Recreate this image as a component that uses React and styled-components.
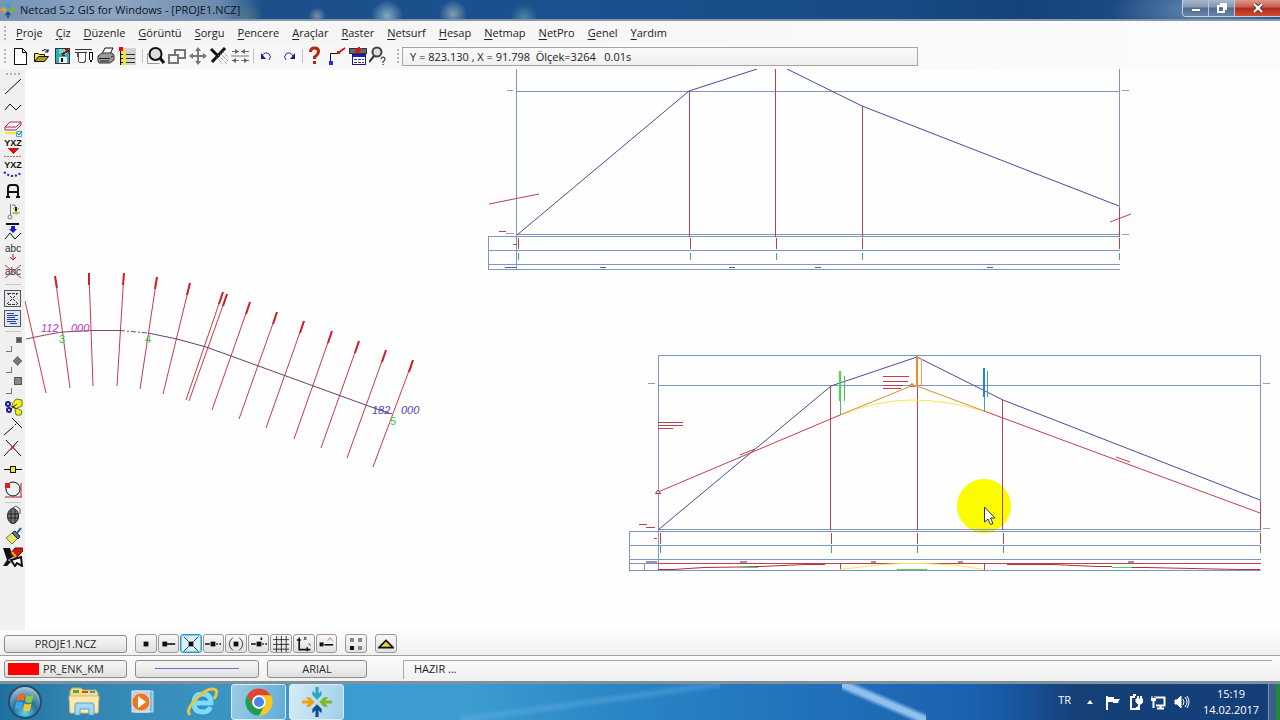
import React from "react";
import styled, { createGlobalStyle } from "styled-components";

const GlobalStyle = createGlobalStyle`
  * { box-sizing: border-box; }
  body {
    margin: 0;
    background: #fff;
    color: #222;
    font-family: "Open Sans", "Noto Sans", sans-serif;
    font-size: 11px;
    line-height: 16px;
  }
  button {
    margin: 0;
    padding: 0;
    border: 0;
    background: none;
    color: inherit;
    font: inherit;
  }
`;

const Window = styled.div`
  display: flex;
  flex-direction: column;
  min-height: 100vh;
`;

/* ---------- title bar ---------- */

const TitleBar = styled.header`
  display: flex;
  align-items: flex-start;
  height: 21px;
  border-bottom: 2px solid #8797ab;
  background:
    linear-gradient(90deg, rgba(150, 172, 198, 0.75), rgba(170, 188, 208, 0.8) 120px, rgba(140, 165, 190, 0.7) 220px, transparent 262px),
    radial-gradient(circle 16px at 248px 18px, rgba(60, 105, 105, 0.9), transparent),
    radial-gradient(circle 9px at 317px 16px, rgba(150, 160, 175, 0.8), transparent),
    radial-gradient(circle 16px at 387px 16px, rgba(140, 180, 195, 0.9), transparent),
    radial-gradient(circle 14px at 453px 14px, rgba(140, 165, 180, 0.9), transparent),
    radial-gradient(circle 14px at 524px 18px, rgba(80, 140, 165, 0.9), transparent),
    radial-gradient(ellipse 90px 30px at 1200px 10px, rgba(130, 160, 195, 0.7), transparent),
    linear-gradient(90deg, #1d4c86, #1b5190 45%, #184a85 70%, #15427a 80%, #25568f);
`;

const TitleText = styled.h1`
  flex: 1;
  margin: 0;
  padding: 2px 0 0 4px;
  color: #10151c;
  font-size: 11px;
  font-weight: 400;
  line-height: 16px;
`;

const TitleLogo = styled.svg`
  width: 16px;
  height: 18px;
  margin-top: 1px;
`;

const Caption = styled.div`
  display: flex;
  height: 17px;
  border: 1px solid #c3d0de;
  border-top: 0;
  border-right: 0;
  border-radius: 0 0 0 4px;
  overflow: hidden;
`;

const CaptionButton = styled.button`
  display: flex;
  align-items: center;
  justify-content: center;
  width: ${(p) => (p.$close ? 45 : 26)}px;
  border-right: ${(p) => (p.$close ? 0 : 1)}px solid #b9c8d8;
  background: ${(p) =>
    p.$close
      ? "linear-gradient(#dc9c8c, #c9594a 45%, #b52b1b 50%, #cf4a33)"
      : "linear-gradient(#a9b9cb, #8095b0 45%, #506d92 50%, #6884a6)"};
`;

/* ---------- menu and tool bars ---------- */

const MenuBar = styled.nav`
  display: flex;
  align-items: center;
  gap: 13px;
  height: 24px;
  padding-left: 4px;
  background: linear-gradient(90deg, #f3f3f3, #f9f9f9 70%, #fbfbfb);
`;

const MenuItem = styled.button`
  white-space: nowrap;
  u { text-underline-offset: 2px; }
`;

const Grip = styled.span`
  flex: none;
  width: ${(p) => (p.$across ? 14 : 2)}px;
  height: ${(p) => (p.$across ? 2 : 14)}px;
  background: ${(p) =>
    p.$across
      ? "repeating-linear-gradient(90deg, #b4b4b4 0 2px, transparent 2px 4px)"
      : "repeating-linear-gradient(#b4b4b4 0 2px, transparent 2px 4px)"};
`;

const MenuGrip = styled(Grip)`
  margin-right: -3px;
`;

const ToolBar = styled.div`
  display: flex;
  align-items: center;
  height: 24px;
  padding: 0 0 2px 4px;
  background: linear-gradient(90deg, #f6f6f6, #f9f9f9 70%, #fbfbfb);
`;

const ToolGroup = styled.div`
  display: flex;
  flex-direction: ${(p) => (p.$vertical ? "column" : "row")};
  gap: ${(p) => p.$gap || 0}px;
`;

const FirstGroup = styled.div`
  margin-left: 3px;
`;

const ToolButton = styled.button`
  flex: none;
  width: 20px;
  height: 20px;
  svg { display: block; }
`;

const Divider = styled.span`
  flex: none;
  width: 1px;
  height: 14px;
  margin: 0 3px;
  background: #c4c4c4;
`;

const Readout = styled.output`
  flex: 0 1 516px;
  height: 19px;
  margin-left: 3px;
  padding: 0 7px;
  border: 1px solid #a5a5a5;
  background: linear-gradient(#fafafa, #efefef);
  white-space: pre;
  line-height: 17px;
  overflow: hidden;
`;

const ReadoutGrip = styled(Grip)`
  margin-left: 8px;
`;

/* ---------- work area ---------- */

const WorkArea = styled.main`
  display: flex;
  flex: 1;
`;

const SideBar = styled.div`
  display: flex;
  flex: none;
  flex-direction: column;
  align-items: center;
  width: 25px;
  padding-top: 4px;
  background: #f0f0f0;
`;

const SideGroups = styled.div`
  display: flex;
  flex-direction: column;
  align-items: center;
  gap: 1px;
  padding-top: 1px;
`;

const SideRule = styled.span`
  flex: none;
  width: 16px;
  height: 1px;
  margin: ${(p) => (p.$roomy ? 3 : 2)}px 0;
  background: #c8c8c8;
`;

const Drawing = styled.svg`
  display: block;
  flex: 1;
  min-width: 0;
  background: #fefefe;
  font-family: "Liberation Sans", sans-serif;
  font-size: 11px;
`;

/* ---------- status bars ---------- */

const StatusBar = styled.div`
  display: flex;
  align-items: center;
  height: ${(p) => (p.$snap ? 26 : 25)}px;
  padding: ${(p) => (p.$snap ? 2 : 0)}px 0 0 4px;
  border-bottom: ${(p) => (p.$snap ? "1px solid #a0a0a0" : "0")};
  background: linear-gradient(#fcfcfc, #f0f0f0);
`;

const PanelButton = styled.button`
  display: flex;
  align-items: center;
  justify-content: center;
  flex: 0 0 ${(p) => p.$width}px;
  height: 18px;
  margin-right: 8px;
  padding: 0 3px;
  border: 1px solid #8c8c8c;
  border-radius: 3px;
  background: linear-gradient(#f6f6f6, #ededed 50%, #dedede);
  color: #2c2c2c;
`;

const LayerSwatch = styled.span`
  width: 31px;
  height: 12px;
  margin-right: 4px;
  background: #fe0000;
`;

const LayerName = styled.span`
  flex: 1;
  text-align: left;
`;

const LineSample = styled.span`
  width: 84px;
  height: 1px;
  background: #6f70cf;
`;

const SnapGroup = styled.div`
  display: flex;
  flex: 0 0 ${(p) => p.$width}px;
  gap: 1px;
  margin-right: 8px;
`;

const SnapButton = styled.button`
  display: flex;
  align-items: center;
  justify-content: center;
  flex: 1;
  height: 19px;
  border: 1px solid ${(p) => (p.$on ? "#2f9ac4" : "#9a9a9a")};
  border-radius: 3px;
  background: ${(p) => (p.$on ? "#d9f1fa" : "linear-gradient(#f8f8f8, #e0e0e0)")};
  box-shadow: ${(p) => (p.$on ? "inset 0 0 0 1px #7cc9e6" : "none")};
`;

const Message = styled.output`
  flex: 1;
  align-self: stretch;
  margin: 4px 8px 2px 28px;
  padding-left: 10px;
  border: 1px solid #a8a8a8;
  border-right: 0;
  border-bottom: 0;
  line-height: 16px;
`;

/* ---------- taskbar ---------- */

const TaskBar = styled.footer`
  display: flex;
  align-items: stretch;
  height: 39px;
  border-top: 3px solid #7f929c;
  background:
    linear-gradient(to bottom right, transparent 42%, rgba(120, 190, 235, 0.3) 50%, transparent 58%) 460px 0 / 260px 36px no-repeat,
    linear-gradient(to top right, transparent 40%, #8fc0ee 47%, #8fc0ee 53%, transparent 60%) 842px 0 / 84px 36px no-repeat,
    linear-gradient(90deg, #1f6f9f, #3182b0 5%, #3a93c0 16%, #3b9cd2 28%, #3d9dd0 36%, #2b86c6 48%, #2273bb 62%, #1b62ae 76%, #1757a0 79%, #164078 84%, #143e78);
`;

const StartButton = styled.button`
  width: 54px;
  svg { display: block; margin: 0 7px; }
`;

const TaskButton = styled.button`
  display: flex;
  align-items: center;
  justify-content: center;
  width: ${(p) => (p.$open ? 55 : 59)}px;
  margin-right: ${(p) => (p.$open ? 3 : 0)}px;
  border: ${(p) => (p.$open ? "1px solid #dcecf6" : "0")};
  border-radius: 3px;
  background: ${(p) =>
    p.$active
      ? "linear-gradient(100deg, #d5ebf7, #9fd0ea)"
      : p.$open
      ? "linear-gradient(100deg, #9ccbe6, #5facd6)"
      : "none"};
`;

const Tray = styled.div`
  display: flex;
  align-items: center;
  margin-left: auto;
  color: #fff;
`;

const Language = styled.button`
  margin-right: 7px;
  padding-bottom: 4px;
`;

const TrayButton = styled.button`
  width: 23px;
  height: 20px;
  svg { display: block; margin: 0 auto; }
`;

const Clock = styled.time`
  width: 74px;
  margin-left: 1px;
  text-align: center;
`;

const ShowDesktop = styled.button`
  align-self: stretch;
  width: 12px;
  border-left: 1px solid #7d94b0;
  background: linear-gradient(90deg, #3a5f8c 60%, #1f8a3c 65%);
`;

/* ---------- icons ---------- */

const Icon = ({ children, size = 20, crisp = true }) => (
  <svg
    width={size}
    height={size}
    viewBox="0 0 20 20"
    fill="none"
    stroke="#111"
    shapeRendering={crisp ? "crispEdges" : "auto"}
    aria-hidden="true"
  >
    {children}
  </svg>
);

const NetcadMark = () => (
  <g stroke="none">
    {[
      ["#27a9c6", 0],
      ["#7ab929", 90],
      ["#164e86", 180],
      ["#f2a012", 270],
    ].map(([color, turn]) => (
      <path
        key={turn}
        d="M14.300 0h3.400v7l3.300-3v4.500l-5 5-5-5v-4.500l3.300 3z"
        fill={color}
        transform={`rotate(${turn} 16 16)`}
      />
    ))}
  </g>
);

const fileTools = [
  ["Yeni", <Icon><path d="M5.500 2.500h8l4 4v12h-12z" fill="#fff" /><path d="M13.500 2.500v4h4" /></Icon>],
  ["Aç", <Icon crisp={false}><path d="M3.500 15.500v-8h4l1 1h5v3" fill="#f5ea3c" /><path d="M3.500 15.500l4-5h10l-4 5z" fill="#a5a020" /><path d="M11 5q3-3 6 0m0-2v3h-3" /></Icon>],
  ["Kaydet", <Icon><path d="M2.500 2.500h14v15h-14z" fill="#25b5b0" stroke="#333" /><path d="M6 11h8v6H6z" fill="#eee" stroke="none" /><path d="M6 3h8v5H6z" fill="#6fd8d4" stroke="none" /><path d="M9 9l6-5M11 10l-2-3M13 3l4 4" stroke="#8b1414" strokeWidth="2" /><path d="M9 12v4" strokeWidth="2" /></Icon>],
  ["Çizici", <Icon><path d="M0 3.500h17M0 6.500h12" stroke="#333" /><path d="M3.500 6.500v9q3 3 7 0v-9M2.500 6v5" stroke="#555" fill="#fff" /><path d="M14.500 6v7l1.500 3 1.500-3v-7z" fill="#fff" /></Icon>],
  ["Yazdır", <Icon crisp={false}><path d="M5 8l3-6h8l-3 6z" fill="#fff" /><path d="M1 10l4-3h10l2 2v5l-4 3H2l-1-2z" fill="#9a9a9a" stroke="#333" /><path d="M2 12.500h11M14 11l2-1M3 15h9" stroke="#222" /></Icon>],
  ["Katmanlar", <Icon><path d="M2 2h15v17H2z" fill="#d2d2d2" stroke="none" /><path d="M2 4h5v15H2z" fill="#f0e63c" stroke="none" /><path d="M0 1h4v4H0z" fill="#f00" stroke="none" /><path d="M1.500 5v14M2 8.500h2M2 12.500h2M2 16.500h2" /><path d="M7 8.500h9M7 12.500h9M7 16.500h9" stroke="#333" /></Icon>],
];

const viewTools = [
  ["Büyüt", <Icon crisp={false}><path d="M1.500 7.500v10h12" stroke="#999" /><circle cx="9.500" cy="8" r="6" fill="#ddd" strokeWidth="2" /><path d="M14 12l4 5" strokeWidth="3" /></Icon>],
  ["Pencere", <Icon><path d="M7.500 3.500h10v8h-10z" stroke="#777" strokeWidth="2" /><path d="M1.500 8.500h9v8h-9z" fill="#f6f6f6" stroke="#777" strokeWidth="2" /></Icon>],
  ["Kaydır", <Icon crisp={false}><path d="M10 3v14M2 10h16" stroke="#777" strokeWidth="2" /><path d="M10 1l3 4H7zM10 19l3-4H7zM1 10l4-3v6zM19 10l-4-3v6z" fill="#777" stroke="none" /></Icon>],
  ["Yenile", <Icon crisp={false}><path d="M2 3l8 8M16 2L3 16" strokeWidth="3" /><path d="M11 7l8 8M13 5l6 6M9 9l9 9M7 11l7 7" stroke="#777" strokeDasharray="1 1" /></Icon>],
  ["Ölçekle", <Icon crisp={false}><path d="M2 5.500h7m2 0h8M1 10h18M2 14.500h7m2 0h8" stroke="#777" /><path d="M5 3l4 2.500L5 8zM15 3l-4 2.500L15 8zM6 12l-4 2.500L6 17zM14 12l4 2.500-4 2.500z" fill="#666" stroke="none" /></Icon>],
];

const undoTools = [
  ["Geri al", <Icon crisp={false}><path d="M5 10q3-5 7-2 3 3 0 6" stroke="#2a2a9c" /><path d="M4 7v6h5z" fill="#1d1d8a" stroke="none" /></Icon>],
  ["Yinele", <Icon crisp={false}><path d="M14 10q-3-5-7-2-3 3 0 6" stroke="#2a2a9c" /><path d="M16 7v6h-5z" fill="#1d1d8a" stroke="none" /></Icon>],
];

const helpTools = [
  ["Yardım", <Icon crisp={false}><path d="M4.500 6q0-4 4-4t4 3.500q0 3-4 5.500v2" stroke="#b02a12" strokeWidth="3" /><path d="M7 15h3v3H7z" fill="#b02a12" stroke="none" /></Icon>],
  ["Kırık çizgi", <Icon crisp={false}><path d="M3.500 16V7.500H11" /><path d="M11 7l7-5" stroke="#d01818" strokeWidth="2" /><path d="M2 15h4v4H2z" fill="#1530e0" stroke="none" /><path d="M10 5h3v3h-3z" fill="#d01818" stroke="none" /></Icon>],
  ["Çizelge", <Icon><path d="M1 2h17v5H1z" fill="#666" stroke="#333" /><path d="M5 6l5-5 4 1-3 5z" fill="#d01818" stroke="none" /><path d="M4.500 8.500h13v10h-13z" fill="#fff" stroke="#17178c" /><path d="M5 9.500h12" stroke="#2020b8" strokeWidth="2" /><path d="M6 13.500h10M6 16.500h10" strokeDasharray="3 1" stroke="#3434b0" /></Icon>],
  ["Bul", <Icon crisp={false}><circle cx="8" cy="6" r="4.500" fill="#ddd" stroke="#444" strokeWidth="2" /><path d="M5 10l-5 6" stroke="#333" strokeWidth="2" /><path d="M12 13q0-2 2-2t2 2-2 2.500v1.500m0 1v1" /></Icon>],
];

const glyph = { stroke: "none", fill: "#111", textAnchor: "middle", fontFamily: "Liberation Sans, sans-serif" };

const drawTools = [
  ["Çizgi", <Icon crisp={false}><path d="M2 18L18 3" /></Icon>],
  ["Sürekli çizgi", <Icon crisp={false}><path d="M2 13l5-6 6 6 5-5" /></Icon>],
  ["Tabaka", <Icon crisp={false}><path d="M2 15h14" stroke="#f2e640" strokeWidth="2" /><path d="M2 9l5-5h11l-5 5z" fill="#fff" stroke="#b52b44" /><path d="M2 9v3h11l5-5V4" stroke="#b52b44" /><path d="M13.500 13.500h5v5h-5z" stroke="#4aaed0" fill="#d8f2f8" /><path d="M14 15l2 2 3-4" stroke="#2377a5" /></Icon>],
  ["Koordinat", <Icon><text {...glyph} x="10" y="7" fontSize="9" fontWeight="700">YXZ</text><path d="M4 9h12l-6 6z" fill="#d41414" stroke="none" /><path d="M1 17.500h18" stroke="#b66" strokeDasharray="2 1" /></Icon>],
  ["Koordinat yayı", <Icon crisp={false}><text {...glyph} x="10" y="8" fontSize="9" fontWeight="700">YXZ</text><path d="M1 12q9 8 18 0" stroke="#2222c8" strokeWidth="2" strokeDasharray="2 2" /></Icon>],
];

const textTools = [
  ["Yazı", <Icon crisp={false}><path d="M5 16V7q0-3 3-3h4q3 0 3 3v9M5 11h10M3 16h4M13 16h4" strokeWidth="2" /></Icon>],
  ["Nokta", <Icon crisp={false}><path d="M7.500 3v11M9 4h3v3" stroke="#777" /><circle cx="7" cy="16" r="2" stroke="#777" /><path d="M13 6v8M10 7l6 6M16 7l-6 6M9 12h8" stroke="#9ab420" /><path d="M13 6v4" stroke="#222" strokeWidth="2" /></Icon>],
  ["Kot", <Icon crisp={false}><path d="M3 3h13" strokeWidth="2" /><path d="M8 5h4v3h2l-4 4-4-4h2z" fill="#1a1ad0" stroke="none" /><path d="M2 18l5-6 5 6 6-6" /></Icon>],
  ["Yazı taşı", <Icon crisp={false}><text {...glyph} x="10" y="11" fontSize="10" fill="#333">abc</text><path d="M10 13v6m-3-3l3 3 3-3" stroke="#d41414" /></Icon>],
  ["Yazı sil", <Icon crisp={false}><text {...glyph} x="10" y="14" fontSize="10" fill="#333">abc</text><path d="M2 4l16 13M18 4L2 17" stroke="#b5474f" /></Icon>],
];

const boxTools = [
  ["Alan", <Icon><path d="M1.500 2.500h16v16h-16z" fill="#e4e8ec" stroke="#555" /><path d="M4 5l5 5M15 5l-5 5M9 11l-5 5M10 11l5 5M5 5h9M5 16h9" strokeDasharray="3 1" stroke="#333" /></Icon>],
  ["Liste", <Icon><path d="M1.500 1.500h16v16h-16z" fill="#dfe6f4" stroke="#555" /><path d="M4 4.500h7M4 6.500h11M4 8.500h8M4 10.500h11M4 12.500h9M7 14.500h7" stroke="#2c3aa5" /></Icon>],
];

const cornerIcon = (shape) => <Icon><path d="M8.500 12v5.500H3" stroke="#777" />{shape}</Icon>;

const editTools = [
  ["Köşe", cornerIcon(<path d="M13.500 3.500h5v5h-5z" fill="#555" stroke="#777" />)],
  ["Kilit", cornerIcon(<path d="M14 1l5 5-5 5-5-5z" fill="#777" stroke="none" />)],
  ["Blok", cornerIcon(<path d="M11.500 1.500h7v7h-7z" fill="#888" stroke="#555" />)],
  ["Kes", <Icon crisp={false}><path d="M9 7l4-5 6 1v6l-5 2 5 3-1 4h-5l-1-6z" fill="#f5ec20" stroke="#6d7b18" /><circle cx="5" cy="7" r="2" stroke="#1c1c8c" strokeWidth="2" /><circle cx="6" cy="13" r="2" stroke="#1c1c8c" strokeWidth="2" /><path d="M8 9l6 3M8 12l6-5" stroke="#222" /></Icon>],
];

const trimTools = [
  ["Uzat", <Icon crisp={false}><path d="M1 18l8-7" /><path d="M9 11l5-5" strokeDasharray="2 2" /><path d="M9 1l10 10" /></Icon>],
  ["Kesişim", <Icon crisp={false}><path d="M1 18L15 3M3 2l15 16" /><path d="M8 7l4 5M12 7l-4 5" stroke="#dc1c1c" /></Icon>],
  ["Böl", <Icon><path d="M1 10.500h18" /><path d="M7.500 7.500h5v6h-5z" fill="#f0e640" /></Icon>],
  ["Daire", <Icon crisp={false}><circle cx="10" cy="9" r="7" /><path d="M2 17h17M18 3v14" stroke="#b32424" /><path d="M2 3h5v5H2z" fill="#e51a1a" stroke="none" /></Icon>],
];

const lastTools = [
  ["Patlat", <Icon crisp={false}><ellipse cx="10" cy="11" rx="5.500" ry="7.500" fill="#777" stroke="#222" /><path d="M5 9h11M5 13h11M8 5v13M12 5v13" stroke="#222" /><path d="M8 4l5-3 4 3v5" stroke="#555" /></Icon>],
  ["Temizle", <Icon crisp={false}><path d="M3 12l6-5 6 5-6 6z" fill="#e8e868" stroke="#7a7a30" /><path d="M9 7l3-2 5 5-2 3z" fill="#5577a5" stroke="#223" /><path d="M14 7l4-5" strokeWidth="2" stroke="#2d4b86" /></Icon>],
  ["Sil", <Icon crisp={false}><path d="M0 1h7l3 9-5 3 3 2-4 4H0l4-6z" fill="#111" stroke="none" /><path d="M8 13l10-3 1 9-5-3-2 3z" fill="#fff" strokeWidth="2" /><path d="M7 7l5-6h8v3l-7 7z" fill="#c91d12" stroke="#601010" /><path d="M9 5l4 5" stroke="#f4c020" strokeWidth="2" /></Icon>],
];

const dot = <path d="M7 7h6v6H7z" fill="#111" stroke="none" />;

const snapTools = [
  ["Nokta yakala", dot],
  ["Uç nokta", <g><path d="M3 7h6v6H3z" fill="#111" stroke="none" /><path d="M9 10h10" strokeWidth="2" /></g>],
  ["Kesişim yakala", <g>{dot}<path d="M1 1l6 6M19 1l-6 6M1 19l6-6M19 19l-6-6" /></g>, true],
  ["Orta nokta", <g>{dot}<path d="M0 10h6M14 10h2M18 10h2" strokeWidth="2" /></g>],
  ["Merkez", <g>{dot}<path d="M6 2q-9 8 0 16M14 2q9 8 0 16" /></g>],
  ["En yakın", <g>{dot}<path d="M0 10h6M14 10h2M18 10h2M13 2v3" strokeWidth="2" /></g>],
  ["Izgara", <path d="M4.500 0v20M10.500 0v20M16.500 0v20M0 4.500h20M0 10.500h20M0 16.500h20" />],
  ["Eksenler", <g><path d="M4 2v15h14M1 5h5M14 14v5" strokeWidth="2" /><path d="M10 1l3 4M13 1l-3 4M16 9l2 3" /></g>],
  ["Serbest", <g><path d="M2 8h5v5H2z" fill="#111" stroke="none" /><path d="M8 11h11" strokeWidth="2" /><path d="M12 6l3-4 3 4" stroke="#d45555" /></g>],
];

const ToolSet = ({ items, gap, vertical }) => (
  <ToolGroup $gap={gap} $vertical={vertical}>
    {items.map(([name, icon]) => (
      <ToolButton key={name} type="button" aria-label={name}>{icon}</ToolButton>
    ))}
  </ToolGroup>
);

/* ---------- drawing ---------- */

const BLUE = "#7f97c0";
const NAVY = "#4a48a0";
const RED = "#c2404c";
const GREEN = "#36b85a";
const YELLOW = "#f5ea4a";
const ORANGE = "#d98e3a";

/* Separate line segments of one colour: [x1, y1, x2, y2] */
const Segments = ({ color, width = 1, items, smooth }) => (
  <path
    d={items.map(([a, b, c, d]) => `M${a} ${b}L${c} ${d}`).join("")}
    stroke={color}
    strokeWidth={width}
    shapeRendering={smooth ? "auto" : "crispEdges"}
  />
);

const crossSections = [
  [25, 301, 46, 393], [55, 276, 70, 388], [89, 273, 93, 386], [124, 273, 117, 386],
  [157, 277, 140, 389], [190, 283, 163, 394], [223, 292, 186, 400], [227, 294, 189, 401],
  [250, 302, 212, 410], [277, 312, 239, 419], [304, 321, 266, 428], [332, 331, 294, 439],
  [359, 341, 321, 448], [386, 350, 347, 458], [413, 360, 373, 467],
];

const sectionLabels = crossSections.slice(1).map(([x1, y1, x2, y2]) => {
  const t = 12 / (y2 - y1);
  return [x1, y1, Math.round(x1 + (x2 - x1) * t), y1 + 12];
});

const stations = (xs, top, bottom) => xs.map((x) => [x, top, x, bottom]);

const Plan = () => (
  <g>
    <Segments smooth color="#c83c46" items={crossSections} />
    <Segments smooth color="#d41c26" width={2} items={sectionLabels} />
    <path d="M26 339L50 334L63 332L92 330.500H120" stroke="#8d4468" />
    <path d="M120 330.500L148 333" stroke="#6a4a78" strokeDasharray="5 2 2 2" />
    <path d="M148 333L177 339L206 347L231 356L374 408L392 414" stroke="#6d3a70" />
    <g fontStyle="italic" stroke="none">
      <text x="41" y="332" fill="#b43cc4">112</text>
      <text x="71" y="332" fill="#b43cc4">000</text>
      <text x="372" y="414" fill="#4a44b4">182</text>
      <text x="401" y="414" fill="#4a44b4">000</text>
    </g>
    <g fill="#35c848" stroke="none">
      <text x="59" y="343">3</text>
      <text x="145" y="343">4</text>
      <text x="390" y="425">5</text>
    </g>
  </g>
);

const UpperProfile = () => (
  <g>
    <Segments color={BLUE} items={[
      [516.5, 69, 516.5, 269], [516, 91.5, 1120, 91.5], [1119.5, 69, 1119.5, 207],
      [516, 234.5, 1120, 234.5], [488, 236.5, 1120, 236.5], [488, 250.5, 1120, 250.5],
      [488, 264.5, 1120, 264.5], [488, 269.5, 1120, 269.5], [488.5, 236, 488.5, 270],
    ]} />
    <Segments color="#9a9ab0" items={[[507, 90.5, 513, 90.5], [1122, 90.5, 1129, 90.5], [1122, 234.5, 1129, 234.5], [506, 233.5, 514, 233.5]]} />
    <path d="M517 235L689 91L757 69M787 69L862 106L1119 206" stroke={NAVY} />
    <Segments color={RED} items={[
      [689.5, 91, 689.5, 237], [775.5, 69, 775.5, 237], [862.5, 106, 862.5, 237], [1119.5, 207, 1119.5, 237],
      ...stations([518.5, 690.5, 776.5, 862.5, 1119.5], 238, 249), [499, 231.5, 506, 231.5], [513, 244.5, 517, 244.5],
    ]} />
    <Segments smooth color={RED} items={[[489, 204, 539, 194], [1110, 222, 1131, 214]]} />
    <Segments color={GREEN} items={stations([518.5, 690.5, 776.5, 862.5, 1119.5], 253, 260)} />
    <Segments color="#5a58a8" items={[[505, 267.5, 516, 267.5], [600, 267.5, 606, 267.5], [729, 267.5, 735, 267.5], [815, 267.5, 821, 267.5], [987, 267.5, 993, 267.5]]} />
  </g>
);

const LowerProfile = () => (
  <g>
    <circle cx="984" cy="506" r="27" fill="#fdfb00" stroke="none" />
    <Segments color={BLUE} items={[
      [658.5, 355, 658.5, 570], [658, 355.5, 1261, 355.5], [1260.5, 355, 1260.5, 501], [658, 385.5, 1261, 385.5],
      [658, 529.5, 1261, 529.5], [629, 531.5, 1261, 531.5], [629, 545.5, 1261, 545.5], [629, 559.5, 1261, 559.5],
      [629, 563.5, 658, 563.5], [629, 570.5, 1261, 570.5], [629.5, 531, 629.5, 571], [644.5, 564, 644.5, 570],
    ]} />
    <Segments color="#9a9ab0" items={[[648, 383.5, 655, 383.5], [1263, 383.5, 1270, 383.5], [1263, 528.5, 1270, 528.5]]} />
    <path d="M658 530L831 386L917 357L1003 400L1260 500" stroke={NAVY} />
    <Segments color={RED} items={[
      [830.5, 386, 830.5, 530], [917.5, 387, 917.5, 530], [1002.5, 400, 1002.5, 530], [1260.5, 501, 1260.5, 530],
      ...stations([660.5, 831.5, 917.5, 1003.5, 1260.5], 533, 544),
      [883, 376.5, 909, 376.5], [883, 381.5, 908, 381.5], [883, 385.5, 903, 385.5], [883, 388.5, 901, 388.5],
      [658, 422.5, 683, 422.5], [658, 425.5, 683, 425.5], [658, 428.5, 673, 428.5],
      [639, 524.5, 647, 524.5], [646, 527.5, 655, 527.5], [654, 538.5, 657, 538.5],
      [658, 563.5, 901, 563.5], [924, 563.5, 1261, 563.5], [840.5, 564, 840.5, 570], [984.5, 564, 984.5, 570],
    ]} />
    <path d="M658 492L840 415M984 411L1260 513M740 455L755 449M1116 457L1130 462" stroke={RED} />
    <path d="M655.500 493.500L658 490L660.500 493.500ZM909.500 386.500L912 383.500L914.500 386.500Z" stroke="#b5252f" fill="#fff" />
    <path d="M840 415Q878 400 912 400T984 411" stroke={YELLOW} />
    <path d="M840 415L911 386H917L984 411" stroke={ORANGE} />
    <Segments color="#f58a1c" width={2} items={[[917, 356, 917, 386]]} />
    <Segments color="#e0a860" items={[[921.5, 359, 921.5, 385]]} />
    <Segments color="#3ee03e" width={2} items={[[840, 371, 840, 401]]} />
    <Segments color="#52b862" items={[[844.5, 376, 844.5, 401], [840.5, 401, 840.5, 415]]} />
    <Segments color="#2583d2" width={2} items={[[984, 368, 984, 397]]} />
    <Segments color="#4a96c4" items={[[987.5, 371, 987.5, 397], [984.5, 397, 984.5, 411]]} />
    <Segments color={GREEN} items={stations([660.5, 831.5, 917.5, 1003.5, 1260.5], 546, 553)} />
    <Segments color="#9593bd" width={2} items={[[646, 562, 657, 562], [740, 562, 747, 562], [871, 562, 876, 562], [958, 562, 963, 562], [1128, 562, 1134, 562]]} />
    <path d="M658 569.500H673L704 567.500L740 567L760 566.500L805 564.500H825M1007 564.500H1053L1098 566.500H1112M1132 567.500H1146L1192 568.500L1238 569.500H1260" stroke="#bb2b36" />
    <path d="M840 569.500L882 564.500L901 563.500H924L954 565L984 569.500" stroke={YELLOW} />
    <Segments color="#48d060" items={[[740, 567.5, 758, 567.5], [897, 569.5, 927, 569.5], [1112, 567.5, 1132, 567.5]]} />
    <path d="M984.500 507v15l3.500-3 2.500 5.500 2.500-1-2.500-5.500h4.500z" fill="#fff" stroke="#333" />
  </g>
);

const menus = ["Proje", "Çiz", "Düzenle", "Görüntü", "Sorgu", "Pencere", "Araçlar", "Raster", "Netsurf", "Hesap", "Netmap", "NetPro", "Genel", "Yardım"];

export default function App() {
  return (
    <Window>
      <GlobalStyle />
      <TitleBar>
        <TitleLogo viewBox="0 0 32 32" aria-hidden="true"><NetcadMark /></TitleLogo>
        <TitleText>Netcad 5.2 GIS for Windows - [PROJE1.NCZ]</TitleText>
        <Caption>
          <CaptionButton type="button" aria-label="Simge durumuna küçült">
            <svg width="12" height="10"><path d="M1.500 5.500h9v3h-9z" fill="#fff" stroke="#5a6a80" /></svg>
          </CaptionButton>
          <CaptionButton type="button" aria-label="Önceki boyut">
            <svg width="12" height="12" fill="none"><path d="M4 1h7v7H9V3H4z" fill="#fff" /><path d="M2 4h6v6H2z" stroke="#fff" strokeWidth="2" /></svg>
          </CaptionButton>
          <CaptionButton type="button" $close aria-label="Kapat">
            <svg width="12" height="10"><path d="M2 1l8 8M10 1L2 9" stroke="#6b3838" strokeWidth="4" /><path d="M2 1l8 8M10 1L2 9" stroke="#fff" strokeWidth="2" /></svg>
          </CaptionButton>
        </Caption>
      </TitleBar>

      <MenuBar>
        <MenuGrip />
        {menus.map((name) => (
          <MenuItem key={name} type="button"><u>{name[0]}</u>{name.slice(1)}</MenuItem>
        ))}
      </MenuBar>

      <ToolBar>
        <Grip />
        <FirstGroup>
          <ToolSet items={fileTools} gap={2} />
        </FirstGroup>
        <Divider />
        <ToolSet items={viewTools} gap={1} />
        <Divider />
        <ToolSet items={undoTools} gap={2} />
        <Divider />
        <ToolSet items={helpTools} gap={1} />
        <ReadoutGrip />
        <Readout>{"Y = 823.130 , X = 91.798  Ölçek=3264   0.01s"}</Readout>
      </ToolBar>

      <WorkArea>
        <SideBar>
          <Grip $across />
          <SideGroups>
            <ToolSet vertical items={drawTools} gap={1} />
            <ToolSet vertical items={textTools} />
          </SideGroups>
          <SideRule $roomy />
          <ToolSet vertical items={boxTools} gap={1} />
          <SideRule />
          <ToolSet vertical items={editTools} gap={1} />
          <ToolSet vertical items={trimTools} gap={1} />
          <SideRule />
          <ToolSet vertical items={lastTools} gap={1} />
        </SideBar>
        <Drawing viewBox="25 69 1255 561" fill="none" role="img" aria-label="PROJE1.NCZ">
          <Plan />
          <UpperProfile />
          <LowerProfile />
        </Drawing>
      </WorkArea>

      <StatusBar $snap>
        <PanelButton type="button" $width={123}>PROJE1.NCZ</PanelButton>
        <SnapGroup $width={202}>
          {snapTools.map(([name, icon, on]) => (
            <SnapButton key={name} type="button" $on={on} aria-label={name}><Icon size={16} crisp={false}>{icon}</Icon></SnapButton>
          ))}
        </SnapGroup>
        <SnapGroup $width={22}>
          <SnapButton type="button" aria-label="Seçenekler">
            <Icon size={16}>
              <path d="M3 3h5v5H3zM12 3h5v5h-5zM12 12h5v5h-5z" fill="#888" stroke="none" />
              <path d="M3 12h5v5H3z" fill="#111" stroke="none" />
            </Icon>
          </SnapButton>
        </SnapGroup>
        <SnapGroup $width={22}>
          <SnapButton type="button" aria-label="Yukarı">
            <Icon size={16} crisp={false}><path d="M1 14.500l9-9 9 9z" fill="#f7ca36" strokeWidth="2" /></Icon>
          </SnapButton>
        </SnapGroup>
      </StatusBar>

      <StatusBar>
        <PanelButton type="button" $width={123}><LayerSwatch /><LayerName>PR_ENK_KM</LayerName></PanelButton>
        <PanelButton type="button" $width={124} aria-label="Çizgi tipi"><LineSample /></PanelButton>
        <PanelButton type="button" $width={100}>ARIAL</PanelButton>
        <Message>HAZIR ...</Message>
      </StatusBar>

      <TaskBar>
        <StartButton type="button" aria-label="Başlat">
          <svg width="36" height="36" viewBox="0 0 36 36">
            <defs>
              <radialGradient id="orb" cx="50%" cy="85%" r="85%">
                <stop offset="0" stopColor="#59d4f2" />
                <stop offset="0.45" stopColor="#22719f" />
                <stop offset="1" stopColor="#b4ccd8" />
              </radialGradient>
            </defs>
            <circle cx="18" cy="18" r="16" fill="url(#orb)" stroke="#274f6c" strokeWidth="2" />
            <path d="M11 11q4-3 7-1l-1.500 7q-3-2-7 0z" fill="#ee6a2c" />
            <path d="M19.500 11q3 2 7 0l-1.500 7q-4 2-7-.500z" fill="#8fc83e" />
            <path d="M9 18.500q4-2 7 0l-1.500 7q-3-2-7 0z" fill="#42a4e4" />
            <path d="M17.500 19.500q3 2 7 0l-1.500 7q-4 2-7 0z" fill="#fbc72e" />
          </svg>
        </StartButton>
        <TaskButton type="button" aria-label="Windows Gezgini">
          <svg width="34" height="32" viewBox="0 0 34 32">
            <path d="M3 5l2-3h9l2 2h13l2 3v19H3z" fill="#f3dc8c" stroke="#c8a850" />
            <path d="M6 4h6v3H6z" fill="#4faa48" /><path d="M15 5h6v2h-6z" fill="#d34a3a" /><path d="M23 5h5v2h-5z" fill="#4a8fd0" />
            <path d="M2 10h30l-1 17H3z" fill="#f8eab0" stroke="#d5bc6c" />
            <path d="M8 29V19q0-2 2-2h15q2 0 2 2v10h-5v-6h-9v6z" fill="#a7d8f2" stroke="#5b9fc8" />
          </svg>
        </TaskButton>
        <TaskButton type="button" aria-label="Windows Media Player">
          <svg width="28" height="28" viewBox="0 0 28 28">
            <path d="M6 3h18v21H6z" fill="#83b8e0" stroke="#c8e0f2" /><path d="M3 3h17v21H3z" fill="#b5d3ec" stroke="#e0eef8" />
            <circle cx="12" cy="14" r="9" fill="#ec7624" stroke="#fbd0a4" /><path d="M9 8l8 6-8 6z" fill="#fff" />
          </svg>
        </TaskButton>
        <TaskButton type="button" aria-label="Internet Explorer">
          <svg width="34" height="34" viewBox="0 0 34 34" fill="none">
            <path d="M9 18h17q0-9-8.500-9T9 18t8.500 9q6 0 8-5" stroke="#2a8ad0" strokeWidth="7" />
            <path d="M9 18h17q0-9-8.500-9T9 18t8.500 9q6 0 8-5" stroke="#7fdcf8" strokeWidth="5" />
            <path d="M5 30Q0 25 12 13T31 5q2 3-2 9" stroke="#e9c53a" strokeWidth="3" />
          </svg>
        </TaskButton>
        <TaskButton type="button" $open aria-label="Google Chrome">
          <svg width="28" height="28" viewBox="0 0 28 28">
            <circle cx="14" cy="14" r="13.500" fill="#fbc91e" />
            <path d="M2.300 7.250A13.500 13.500 0 0 1 25.700 7.250H14A6.750 6.750 0 0 0 8.200 17.400z" fill="#de4437" />
            <path d="M2.300 7.250L8.200 17.400A6.750 6.750 0 0 0 19.800 17.400L14 27.500A13.500 13.500 0 0 1 2.300 7.250z" fill="#1f9d58" />
            <circle cx="14" cy="14" r="6.800" fill="#fff" /><circle cx="14" cy="14" r="5" fill="#4586f0" />
          </svg>
        </TaskButton>
        <TaskButton type="button" $open $active aria-label="Netcad">
          <svg width="30" height="30" viewBox="0 0 32 32"><NetcadMark /></svg>
        </TaskButton>

        <Tray>
          <Language type="button">TR</Language>
          <TrayButton type="button" aria-label="Gizli simgeler">
            <svg width="8" height="20"><path d="M1 12l3-4 3 4z" fill="#fff" /></svg>
          </TrayButton>
          <TrayButton type="button" aria-label="İşlem merkezi">
            <svg width="16" height="20" fill="none"><path d="M2 4v14" stroke="#fff" strokeWidth="2" /><path d="M3 5h6v2h6l-2 3 1 1H8v-1H3z" fill="#fff" /></svg>
          </TrayButton>
          <TrayButton type="button" aria-label="Güç">
            <svg width="14" height="20" fill="none" stroke="#fff"><path d="M6 5H2v12h8v-2" strokeWidth="2" /><path d="M4 3h3M9 4v3M12 4v3M10 11v3q0 2-3 2" strokeWidth="2" /><path d="M7 7h7v3l-2 2H9L7 10z" fill="#fff" /></svg>
          </TrayButton>
          <TrayButton type="button" aria-label="Ağ">
            <svg width="15" height="20" fill="none" stroke="#fff"><path d="M5 5.500h8.500v8H5M6 16.500h7M9.500 14v3M2.500 9v7" strokeWidth="2" /><path d="M1 4v3M4 4v3" /><path d="M0 6h5v3H0z" fill="#fff" stroke="none" /></svg>
          </TrayButton>
          <TrayButton type="button" aria-label="Ses">
            <svg width="16" height="20" fill="none" stroke="#fff"><path d="M1 8h2l4-4v12l-4-4H1z" fill="#fff" /><path d="M9 7q2 3 0 6M11 5q4 5 0 10M13 4q4 6 0 12" /></svg>
          </TrayButton>
          <Clock dateTime="2017-02-14T15:19">15:19<br />14.02.2017</Clock>
          <ShowDesktop type="button" aria-label="Masaüstünü göster" />
        </Tray>
      </TaskBar>
    </Window>
  );
}
